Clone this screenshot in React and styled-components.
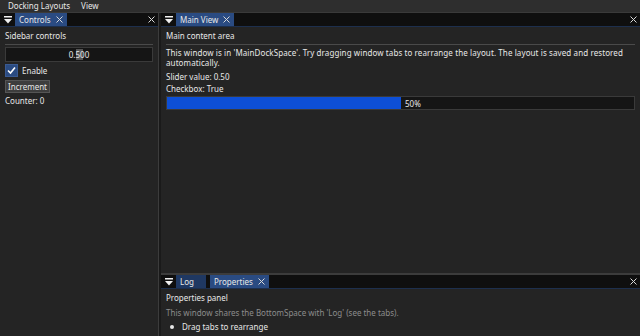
import React from "react";
import styled, { createGlobalStyle } from "styled-components";

const Global = createGlobalStyle`
  html, body { margin: 0; padding: 0; background: #242424; }
  body { font-family: "Noto Sans", "Open Sans", sans-serif; font-size: 8px; color: #e8e8e8; }
  * { box-sizing: border-box; }
`;

const Screen = styled.div`
  width: 640px;
  height: 336px;
  display: flex;
  flex-direction: column;
  overflow: hidden;
  background: #242424;
`;

const MenuBar = styled.div`
  height: 13px;
  display: flex;
  align-items: center;
  gap: 11px;
  padding-left: 8px;
  background: #2e2e2e;
  border-bottom: 1px solid #3a3a3a;
  line-height: 12px;
`;

const MenuItem = styled.span`
  color: #e8e8e8;
`;

const Dock = styled.div`
  flex: 1;
  display: flex;
  min-height: 0;
`;

const Column = styled.div`
  display: flex;
  flex-direction: column;
  width: ${(p) => (p.$w ? p.$w + "px" : "auto")};
  flex: ${(p) => (p.$w ? "none" : "1")};
  min-width: 0;
`;

const VSplit = styled.div`
  width: 3px;
  background: #1a1a1a;
  border-left: 1px solid #3c3c3c;
`;

const HSplit = styled.div`
  height: 2px;
  background: #3c3c3c;
`;

const Panel = styled.div`
  display: flex;
  flex-direction: column;
  flex: ${(p) => (p.$h ? "none" : "1")};
  height: ${(p) => (p.$h ? p.$h + "px" : "auto")};
  min-height: 0;
  background: #242424;
`;

const TabBar = styled.div`
  height: 14px;
  display: flex;
  align-items: stretch;
  background: #0f0f0f;
  border-bottom: 1px solid #1d2f4d;
`;

const MenuBtn = styled.div`
  width: 15px;
  display: flex;
  align-items: center;
  justify-content: center;
`;

const Tab = styled.div`
  display: flex;
  align-items: center;
  gap: 5px;
  padding: 0 4px 0 4px;
  margin-right: 4px;
  background: ${(p) => (p.$active ? "#2a4b82" : "#1f3862")};
  color: #e8e8e8;
  width: ${(p) => (p.$w ? p.$w + "px" : "auto")};
`;

const CloseBtn = styled.div`
  margin-left: auto;
  width: 14px;
  display: flex;
  align-items: center;
  justify-content: center;
`;

const Body = styled.div`
  padding: 4px 5px;
  display: flex;
  flex-direction: column;
  flex: 1;
  min-height: 0;
`;

const Line = styled.div`
  line-height: 10px;
  white-space: nowrap;
  margin-bottom: ${(p) => (p.$mb ?? 2)}px;
  color: ${(p) => (p.$dim ? "#8c8c8c" : "#e8e8e8")};
`;

const Paragraph = styled.div`
  line-height: 10px;
  white-space: nowrap;
  letter-spacing: 0.1px;
  margin-top: 1px;
  margin-bottom: 4px;
  color: #e8e8e8;
`;

const Separator = styled.div`
  height: 1px;
  background: #4a4a4a;
  margin: 3px 0 2px;
`;

const SliderFrame = styled.div`
  height: 15px;
  background: #151515;
  border: 1px solid #3a3a3a;
  position: relative;
  display: flex;
  align-items: center;
  justify-content: center;
  margin-bottom: 2px;
`;

const Grab = styled.div`
  position: absolute;
  left: 70px;
  top: 1px;
  bottom: 1px;
  width: 7px;
  background: #555;
`;

const SliderText = styled.span`
  position: relative;
`;

const CheckRow = styled.div`
  display: flex;
  align-items: center;
  gap: 4px;
  margin-bottom: 3px;
`;

const CheckBox = styled.div`
  width: 13px;
  height: 13px;
  background: #2a4b82;
  border: 1px solid #3a5a92;
  display: flex;
  align-items: center;
  justify-content: center;
`;

const Button = styled.div`
  align-self: flex-start;
  height: 13px;
  padding: 0 2px;
  background: #3d3d3d;
  border: 1px solid #555;
  line-height: 11px;
  margin-bottom: 3px;
`;

const Progress = styled.div`
  height: 14px;
  background: #151515;
  border: 1px solid #3a3a3a;
  position: relative;
  display: flex;
  align-items: center;
`;

const Fill = styled.div`
  position: absolute;
  left: 0;
  top: 0;
  bottom: 0;
  background: #0d4fd6;
`;

const ProgressLabel = styled.span`
  position: relative;
  margin-left: 238px;
`;

const Bullet = styled.div`
  display: flex;
  align-items: center;
  gap: 8px;
  padding-left: 4px;
  margin-top: 2px;
  line-height: 10px;
  &::before {
    content: "";
    width: 4px;
    height: 4px;
    border-radius: 50%;
    background: #e8e8e8;
  }
`;

const MenuIcon = () => (
  <svg width="8" height="8" viewBox="0 0 8 8">
    <rect x="0" y="0" width="8" height="1.5" fill="#f0f0f0" />
    <path d="M0 3 L8 3 L4 7.5 Z" fill="#f0f0f0" />
  </svg>
);

const XIcon = ({ size = 7 }) => (
  <svg width={size} height={size} viewBox="0 0 7 7">
    <path d="M0.5 0.5 L6.5 6.5 M6.5 0.5 L0.5 6.5" stroke="#d8d8d8" strokeWidth="1" />
  </svg>
);

export default function App() {
  return (
    <Screen>
      <Global />
      <MenuBar>
        <MenuItem>Docking Layouts</MenuItem>
        <MenuItem>View</MenuItem>
      </MenuBar>
      <Dock>
        <Column $w={158}>
          <Panel>
            <TabBar>
              <MenuBtn><MenuIcon /></MenuBtn>
              <Tab $active>Controls <XIcon /></Tab>
              <CloseBtn><XIcon /></CloseBtn>
            </TabBar>
            <Body>
              <Line $mb={0}>Sidebar controls</Line>
              <Separator />
              <SliderFrame>
                <Grab />
                <SliderText>0.500</SliderText>
              </SliderFrame>
              <CheckRow>
                <CheckBox>
                  <svg width="9" height="9" viewBox="0 0 9 9">
                    <path d="M1 4.5 L3.5 7 L8 1.5" stroke="#fff" strokeWidth="1.6" fill="none" />
                  </svg>
                </CheckBox>
                Enable
              </CheckRow>
              <Button>Increment</Button>
              <Line>Counter: 0</Line>
            </Body>
          </Panel>
        </Column>
        <VSplit />
        <Column>
          <Panel>
            <TabBar>
              <MenuBtn><MenuIcon /></MenuBtn>
              <Tab $active>Main View <XIcon /></Tab>
              <CloseBtn><XIcon /></CloseBtn>
            </TabBar>
            <Body>
              <Line $mb={0}>Main content area</Line>
              <Separator />
              <Paragraph>
                This window is in 'MainDockSpace'. Try dragging window tabs to rearrange the layout. The layout is saved and restored
                <br />
                automatically.
              </Paragraph>
              <Line>Slider value: 0.50</Line>
              <Line>Checkbox: True</Line>
              <Progress>
                <Fill style={{ width: "50%" }} />
                <ProgressLabel>50%</ProgressLabel>
              </Progress>
            </Body>
          </Panel>
          <HSplit />
          <Panel $h={61}>
            <TabBar>
              <MenuBtn><MenuIcon /></MenuBtn>
              <Tab $w={30}>Log</Tab>
              <Tab $active>Properties <XIcon /></Tab>
              <CloseBtn><XIcon /></CloseBtn>
            </TabBar>
            <Body>
              <Line $mb={0}>Properties panel</Line>
              <Separator />
              <Line $dim>This window shares the BottomSpace with 'Log' (see the tabs).</Line>
              <Bullet>Drag tabs to rearrange</Bullet>
            </Body>
          </Panel>
        </Column>
      </Dock>
    </Screen>
  );
}
